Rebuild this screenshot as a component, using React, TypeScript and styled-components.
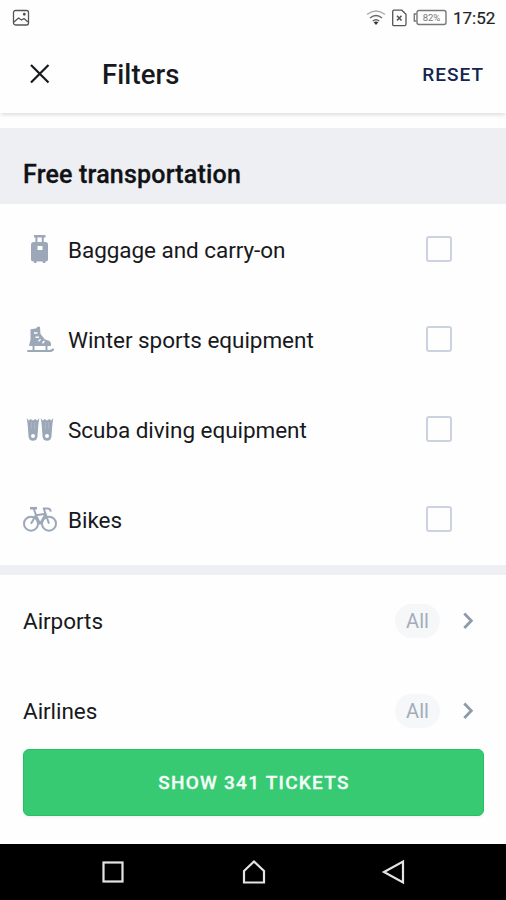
import React from "react";
import styled, { createGlobalStyle } from "styled-components";

const GlobalStyle = createGlobalStyle`
  * { box-sizing: border-box; }
  body { margin: 0; background: #fff; font-family: Roboto, sans-serif; color: #17191c; }
  button { font: inherit; border: 0; padding: 0; background: none; color: inherit; }
  svg { display: block; flex: none; }
`;

const Screen = styled.main`
  display: flex;
  flex-direction: column;
  width: 506px;
  height: 900px;
  overflow: hidden;
  background: #fefefe;
`;

const StatusBar = styled.div`
  display: flex;
  align-items: center;
  flex: none;
  height: 35px;
  padding: 0 10px 0 12px;
`;

const StatusIcons = styled.div`
  display: flex;
  align-items: center;
  margin-left: auto;
`;

const Clock = styled.span`
  width: 43px;
  margin-left: 6px;
  font-size: 17px;
  line-height: 20px;
  white-space: nowrap;
  color: #222;
  -webkit-text-stroke: 0.2px #222;
`;

const Toolbar = styled.header`
  display: flex;
  align-items: center;
  flex: none;
  height: 78px;
  padding: 0 22px 0 29px;
  box-shadow: 0 3px 4px -1px rgba(0, 0, 0, 0.13);
  z-index: 1;
`;

const Title = styled.h1`
  margin: 2px 0 0 51px;
  font-size: 27.5px;
  line-height: 32px;
  font-weight: 500;
  letter-spacing: 0.1px;
`;

const Reset = styled.button`
  margin-left: auto;
  font-size: 19px;
  font-weight: 500;
  letter-spacing: 1px;
  color: #14254f;
`;

const Content = styled.div`
  flex: 1;
  min-height: 0;
  overflow: hidden;
  padding-top: 15px;
`;

const SectionTitle = styled.h2`
  height: 76px;
  margin: 0 0 1px;
  padding: 32px 23px 0;
  background: #eeeff3;
  font-size: 25px;
  line-height: 30px;
  font-weight: 500;
  letter-spacing: 0.2px;
  color: #101215;
  -webkit-text-stroke: 0.3px #101215;
`;

const Row = styled.div`
  display: flex;
  align-items: center;
  height: 90px;
  padding: 0 31px 0 23px;
`;

const Label = styled.span<{ $indent?: boolean }>`
  flex: 1;
  margin-left: ${(p) => (p.$indent ? 11 : 0)}px;
  font-size: 22.5px;
  line-height: 30px;
  letter-spacing: -0.05px;
`;

const Checkbox = styled.span`
  width: 26px;
  height: 26px;
  margin: 0 23px 2px 0;
  border: 2px solid #ccd2e0;
  border-radius: 3px;
`;

const Divider = styled.div`
  height: 10px;
  margin-bottom: 1px;
  background: #eeeff2;
`;

const Pill = styled.span`
  display: flex;
  align-items: center;
  justify-content: center;
  width: 45px;
  height: 34px;
  margin-right: 22px;
  border-radius: 17px;
  background: #f5f7f9;
  font-size: 20px;
  color: #a3adb9;
`;

const Footer = styled.footer`
  flex: none;
  height: 95px;
  padding: 0 22px 0 23px;
`;

const ShowButton = styled.button`
  width: 100%;
  height: 67px;
  padding: 0 0 0 1px;
  border: 1px solid #25c162;
  border-radius: 6px;
  background: #38c973;
  box-shadow: 0 2px 2px rgba(0, 0, 0, 0.04);
  font-size: 19px;
  font-weight: 500;
  letter-spacing: 1.25px;
  color: #f4fff8;
  -webkit-text-stroke: 0.3px #f4fff8;
`;

const NavBar = styled.nav`
  display: flex;
  align-items: center;
  justify-content: space-between;
  flex: none;
  height: 56px;
  padding: 0 99px 0 100px;
  background: #000;
`;

const BaggageIcon = () => (
  <svg width="34" height="34" viewBox="0 0 34 34" fill="#9ca8b8">
    <path d="M11 2h11.500v2.500h-1.700V9.500h-2V4.500h-4.400v5h-2V4.500H11z" />
    <path fillRule="evenodd" d="M11 9h11.500q2.500 0 2.500 2.500v15q0 2-2 2h-.7V30h-2.500v-1.500h-6.300V30H11v-1.500h-.8q-2.200 0-2.200-2v-15Q8 9 11 9zm3.500 4v4h5v-4z" />
  </svg>
);

const SkateIcon = () => (
  <svg width="34" height="34" viewBox="0 0 34 34" fill="none" stroke="#9ca8b8">
    <path fill="#9ca8b8" stroke="none" d="M7.500 6.300l5.500-.8 1.500-1.800h2.500L17.500 11l4.500 5.500 4 1.200q2 .8 2 3V23H6l1.500-6.500z" />
    <path strokeWidth="2" d="M10.500 22v5.500M23.500 22v5.500M4.300 28h22q3 0 4.200-2.300" />
    <path stroke="#fff" strokeWidth="1.400" d="M11 10h3.500M12.500 14.200h3.500M15.500 18.300l2-2M19.500 20.300l1.800-2.300" />
  </svg>
);

const FIN =
  "M3.700 5l2 2.500 2-1.500 2.300 1.500L12.300 6l2 1.500L16.300 5q-.8 5-1.200 9.500l-.6 8.700q-.5 4.600-4.500 4.600t-4.500-4.600l-.6-8.700Q4.600 10 3.700 5zM10 21a2 2 0 1 0 0 4a2 2 0 0 0 0-4z";

const FinsIcon = () => (
  <svg width="34" height="34" viewBox="0 0 34 34" fill="#9ca8b8" fillRule="evenodd">
    <path d={FIN} />
    <path d={FIN} transform="translate(14 0)" />
    <path d="M8.300 9v7M11.700 9v7M22.300 9v7M25.700 9v7" stroke="#b5bec9" strokeWidth=".6" />
  </svg>
);

const BikeIcon = () => (
  <svg width="34" height="34" viewBox="0 0 34 34" fill="none" stroke="#9ca8b8" strokeWidth="2" strokeLinejoin="round">
    <circle cx="8" cy="20.700" r="7" />
    <circle cx="26" cy="20.700" r="7" />
    <path strokeWidth="2.500" d="M7 5.200h7" />
    <path d="M10.500 5l2.500 7L8 20.700M13 12.200l9.700-1.500M13 12.200l4 8.500 5.500-9.500M26 20.700L20.700 5.500H25q2.800.3 2.500 3.200" />
  </svg>
);

const ChevronIcon = () => (
  <svg width="13" height="18" viewBox="0 0 13 18" fill="none" stroke="#8f9aaa" strokeWidth="2.800">
    <path d="M2.300 1.500L9.300 8.700l-7 7.200" />
  </svg>
);

const equipment = [
  { label: "Baggage and carry-on", Icon: BaggageIcon },
  { label: "Winter sports equipment", Icon: SkateIcon },
  { label: "Scuba diving equipment", Icon: FinsIcon },
  { label: "Bikes", Icon: BikeIcon },
];

export default function App() {
  return (
    <Screen>
      <GlobalStyle />
      <StatusBar>
        <svg width="18" height="18" viewBox="0 0 18 18" fill="none" stroke="#555" strokeWidth="1.300">
          <rect x="1.500" y="1.500" width="15" height="14.500" rx="2" />
          <path d="M2 13l4.500-4 3 2 2.500-1.500 4 3.500" />
          <circle cx="12.300" cy="5.300" r=".8" fill="#444" />
        </svg>
        <StatusIcons>
          <svg width="20" height="17" viewBox="0 0 20 17" fill="none" stroke="#666" strokeWidth="1.500">
            <path stroke="#aaa" d="M1 5.500q9-7 18 0" />
            <path d="M4 9q6-5 12 0M6.700 12q3.300-2.700 6.600 0" />
            <path fill="#333" stroke="none" d="M7.700 13.200q2.300-1.500 4.600 0L10 16z" />
          </svg>
          <svg width="27" height="18" viewBox="-5 0 27 18" fill="none" stroke="#555" strokeWidth="1.300">
            <path d="M2.500 1.200h8.300l4.200 4v10q0 1.500-1.500 1.500h-10.500q-1.300 0-1.300-1.500v-12q0-2 1.300-2z" />
            <path strokeWidth="1.600" d="M6 6.700l4.500 4.800M10.500 6.700L6 11.500" />
          </svg>
          <svg width="34" height="17" viewBox="0 0 34 17" fill="none" stroke="#777" strokeWidth="1.400">
            <rect x="4" y="1.500" width="29" height="14" rx="2" />
            <path d="M3.500 5H1.300v7h2.200" />
            <text x="18.500" y="12" textAnchor="middle" fontSize="9.500" fill="#777" stroke="none">82%</text>
          </svg>
          <Clock>17:52</Clock>
        </StatusIcons>
      </StatusBar>
      <Toolbar>
        <svg width="22" height="22" viewBox="0 0 22 22" fill="none" stroke="#17191c" strokeWidth="2.200">
          <path d="M2 2l17.500 17.500M19.500 2L2 19.500" />
        </svg>
        <Title>Filters</Title>
        <Reset>RESET</Reset>
      </Toolbar>
      <Content>
        <SectionTitle>Free transportation</SectionTitle>
        {equipment.map(({ label, Icon }) => (
          <Row key={label}>
            <Icon />
            <Label $indent>{label}</Label>
            <Checkbox />
          </Row>
        ))}
        <Divider />
        {["Airports", "Airlines"].map((label) => (
          <Row key={label}>
            <Label>{label}</Label>
            <Pill>All</Pill>
            <ChevronIcon />
          </Row>
        ))}
      </Content>
      <Footer>
        <ShowButton>SHOW 341 TICKETS</ShowButton>
      </Footer>
      <NavBar>
        <svg width="26" height="26" viewBox="0 0 26 26" fill="none" stroke="#e4e4e4" strokeWidth="2.200">
          <rect x="3.500" y="3.500" width="19" height="19" />
        </svg>
        <svg width="26" height="26" viewBox="0 0 26 26" fill="none" stroke="#e4e4e4" strokeWidth="2.200">
          <path d="M3 12L13 2.500l10 9.500v11.500H3z" />
        </svg>
        <svg width="26" height="26" viewBox="0 0 26 26" fill="none" stroke="#e4e4e4" strokeWidth="2.200">
          <path d="M22 2.500v21L3 13z" />
        </svg>
      </NavBar>
    </Screen>
  );
}
